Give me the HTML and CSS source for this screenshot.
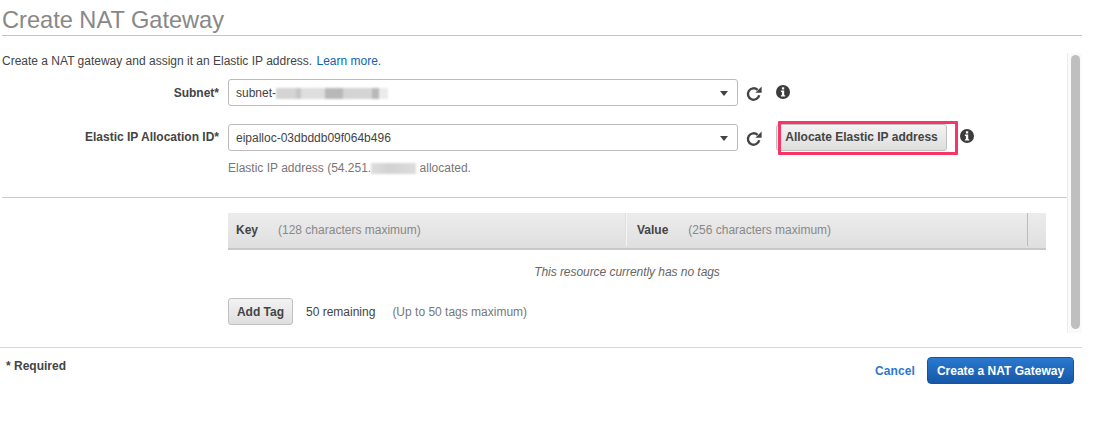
FILE: index.html
```html
<!DOCTYPE html>
<html lang="en">
<head>
<meta charset="utf-8">
<title>Create NAT Gateway</title>
<link rel="stylesheet" href="styles.css">
</head>
<body>
<svg class="defs" width="0" height="0" aria-hidden="true">
  <symbol id="refresh" viewBox="0 0 16 16">
    <path d="M13.2 9.2A5.7 5.7 0 1 1 11.6 3.9" fill="none" stroke="currentColor" stroke-width="2.4"/>
    <path d="M9.4 6.8 15.6 6.8 15.6 .6Z" fill="currentColor"/>
  </symbol>
  <symbol id="info" viewBox="0 0 14 14">
    <circle cx="7" cy="7" r="7" fill="currentColor"/>
    <rect x="5.9" y="2.3" width="2.3" height="2.2" fill="#fff"/>
    <path d="M4.9 5.6H8.2V10.3H9.2V11.6H4.9V10.3H5.9V6.9H4.9Z" fill="#fff"/>
  </symbol>
</svg>
<h1 class="title">Create NAT Gateway</h1>
<div class="panel">
  <div class="main">
    <p class="intro">Create a NAT gateway and assign it an Elastic IP address. <a class="link" href="#">Learn more.</a></p>
    <div class="row row-subnet">
      <label class="label">Subnet*</label>
      <div class="select"><span>subnet-<span class="blur blur-subnet"></span></span><i class="caret"></i></div>
      <svg class="refresh"><use href="#refresh"/></svg>
      <svg class="info info-subnet"><use href="#info"/></svg>
    </div>
    <div class="row row-eip">
      <label class="label">Elastic IP Allocation ID*</label>
      <div class="select"><span>eipalloc-03dbddb09f064b496</span><i class="caret"></i></div>
      <svg class="refresh"><use href="#refresh"/></svg>
      <div class="alloc-wrap">
        <button class="btn btn-alloc">Allocate Elastic IP address</button>
        <span class="highlight"></span>
      </div>
      <svg class="info info-eip"><use href="#info"/></svg>
    </div>
    <p class="help">Elastic IP address (54.251.<span class="blur blur-ip"></span> allocated.</p>
    <hr class="divider">
    <div class="tags">
      <div class="tag-head">
        <div class="col col-key"><b>Key</b><span>(128 characters maximum)</span></div>
        <div class="col col-value"><b>Value</b><span>(256 characters maximum)</span></div>
        <div class="col col-end"></div>
      </div>
      <p class="empty">This resource currently has no tags</p>
      <div class="tag-actions">
        <button class="btn btn-add">Add Tag</button>
        <span class="remaining">50 remaining</span>
        <span class="limit">(Up to 50 tags maximum)</span>
      </div>
    </div>
  </div>
  <div class="scrollbar"><div class="thumb"></div></div>
</div>
<footer class="footer">
  <span class="required">* Required</span>
  <div class="actions">
    <a class="cancel" href="#">Cancel</a>
    <button class="btn-primary">Create a NAT Gateway</button>
  </div>
</footer>
</body>
</html>
```
FILE: styles.css
```css
* { box-sizing: border-box; }
html, body { margin: 0; padding: 0; background: #fff; }
body {
  width: 1107px;
  height: 424px;
  overflow: hidden;
  font-family: "Liberation Sans", Arial, sans-serif;
  font-size: 12px;
  color: #444;
}
.defs { position: absolute; }
.title {
  width: 1080px;
  height: 36px;
  margin: 0 0 0 2px;
  padding-top: 6px;
  font-size: 23.6px;
  line-height: 29px;
  font-weight: 400;
  color: #888;
  border-bottom: 1px solid #c4c4c4;
}
.panel { display: flex; width: 1082px; height: 297px; }
.main { width: 1067px; padding-left: 2px; flex: none; }
.intro { margin: 18px 0 0; height: 15px; line-height: 15px; font-size: 12px; color: #444; }
.link { color: #0f5fb0; text-decoration: none; margin-left: 1px; }
.row { display: flex; align-items: flex-start; }
.row-subnet { margin-top: 10px; }
.row-eip { margin-top: 18px; }
.label {
  width: 217px;
  height: 27px;
  line-height: 27px;
  text-align: right;
  font-weight: 700;
  color: #444;
  flex: none;
}
.row-subnet .label { line-height: 28px; }
.select {
  position: relative;
  width: 510px;
  height: 27px;
  margin-left: 9px;
  padding-left: 7px;
  line-height: 26px;
  color: #444;
  border: 1px solid #bbb;
  border-radius: 3px;
  background: #fff;
  flex: none;
}
.caret {
  position: absolute;
  right: 9px;
  top: 11px;
  border-left: 4.5px solid transparent;
  border-right: 4.5px solid transparent;
  border-top: 5px solid #444;
}
.blur { display: inline-block; filter: blur(1.2px); vertical-align: -2px; height: 11px; }
.blur-subnet {
  width: 112px;
  background: linear-gradient(90deg, #d4d4d4 0 18%, #c6c6c6 18% 22%, #dedede 22% 44%, #b8b8b8 44% 60%, #d4d4d4 60% 86%, #b8b8b8 86% 92%, #ebebeb 92%);
}
.blur-ip { width: 45px; background: linear-gradient(90deg, #ddd, #d2d2d2 40%, #ddd); }
.refresh { width: 16px; height: 16px; margin: 7px 0 0 8px; color: #444; flex: none; }
.info { width: 14px; height: 14px; color: #3c3c3c; flex: none; }
.info-subnet { margin: 6px 0 0 14px; }
.info-eip { margin: 5px 0 0 13px; }
.alloc-wrap { position: relative; margin-left: 14px; flex: none; }
.btn {
  display: block;
  height: 27px;
  padding: 0;
  font: 700 12px "Liberation Sans", Arial, sans-serif;
  color: #444;
  border: 1px solid #c0c0c0;
  border-radius: 3px;
  background: linear-gradient(#f3f3f3, #dedede);
}
.btn-alloc { width: 171px; padding-bottom: 2px; }
.highlight {
  position: absolute;
  left: 2px;
  top: -3px;
  width: 180px;
  height: 34px;
  border: 3px solid #f93467;
  border-radius: 1px;
}
.help { margin: 10px 0 0 226px; height: 15px; line-height: 15px; color: #777; }
.divider { margin: 21px 0 0 0; height: 1px; border: 0; background: #ccc; width: 1065px; }
.tags { margin: 15px 0 0 226px; width: 818px; }
.tag-head {
  display: flex;
  height: 37px;
  background: linear-gradient(#ececec, #dfdfdf);
  border-bottom: 2px solid #c8c8c8;
}
.col { display: flex; align-items: center; height: 33px; padding-left: 8px; line-height: 14px; }
.col b { color: #444; }
.col span { color: #888; }
.col-key { width: 399px; border-right: 1px solid #f5f5f5; box-shadow: inset -1px 0 0 #e0e0e0; }
.col-key span { margin-left: 20px; }
.col-value { width: 401px; border-right: 1px solid #bbb; padding-left: 10px; }
.col-value span { margin-left: 20px; }
.col-end { flex: 1; }
.empty { margin: 15px 0 0; padding-right: 20px; height: 14px; line-height: 14px; text-align: center; font-style: italic; color: #666; letter-spacing: -.05px; }
.tag-actions { display: flex; align-items: center; margin-top: 19px; }
.btn-add { width: 65px; }
.remaining { margin-left: 13px; color: #444; }
.limit { margin-left: 17px; color: #777; }
.scrollbar {
  width: 15px;
  height: 280px;
  margin-top: 17px;
  flex: none;
  padding: 2px 2px 4px 3px;
  background: #fafafa;
  border-left: 1px solid #ececec;
}
.thumb { width: 9px; height: 100%; border-radius: 5px; background: #bfbfbf; }
.footer {
  display: flex;
  justify-content: space-between;
  width: 1082px;
  height: 60px;
  margin-top: 14px;
  border-top: 1px solid #d8d8d8;
}
.required { margin: 11px 0 0 6px; line-height: 14px; font-weight: 700; color: #444; }
.actions { display: flex; align-items: center; height: 27px; margin: 9px 8px 0 0; }
.cancel { font-weight: 700; color: #2b78cf; text-decoration: none; margin-right: 12px; letter-spacing: .1px; }
.btn-primary {
  width: 147px;
  height: 27px;
  padding: 0;
  font: 700 12px "Liberation Sans", Arial, sans-serif;
  color: #fff;
  border: 1px solid #15559f;
  border-radius: 4px;
  background: linear-gradient(#2a79cf, #1657a8);
}
```
